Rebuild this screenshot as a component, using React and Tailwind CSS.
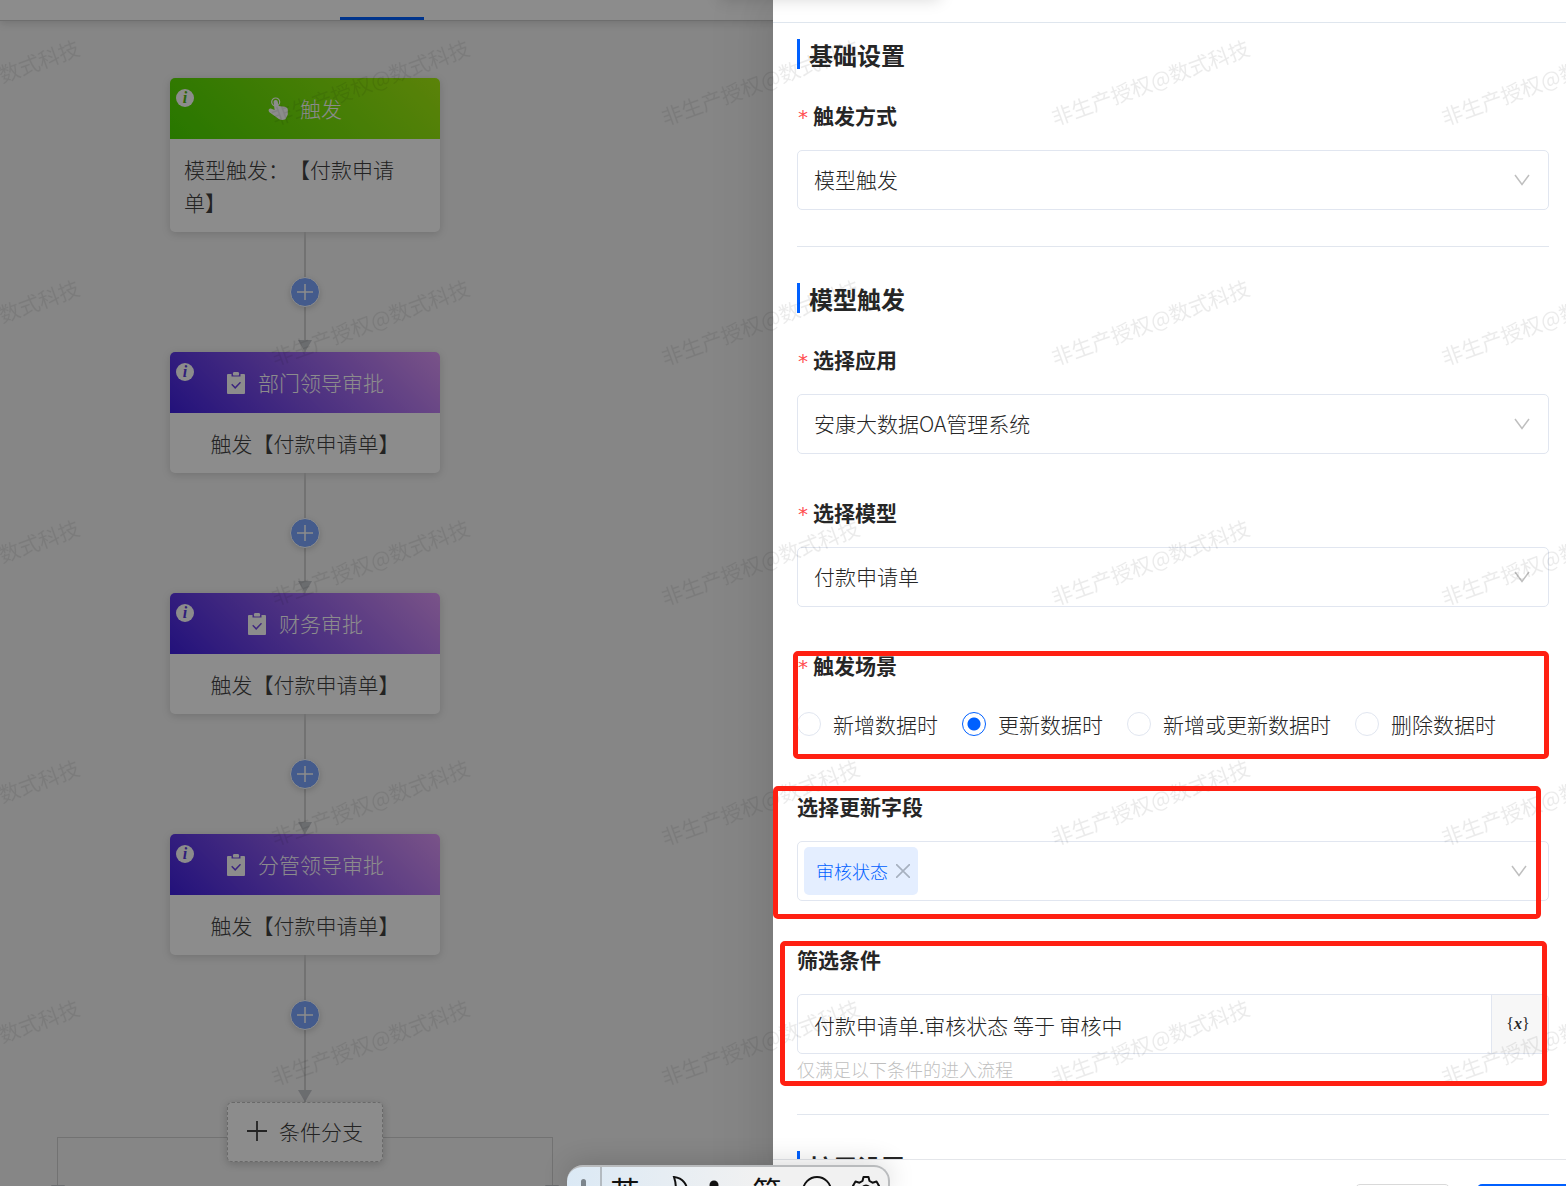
import React, { useState } from 'react';

const approvals = ['部门领导审批', '财务审批', '分管领导审批'];
const scenes = ['新增数据时', '更新数据时', '新增或更新数据时', '删除数据时'];

function ClipboardIcon() {
  return (
    <svg viewBox="0 0 20 22" className="w-5 h-[22px]" fill="currentColor">
      <path
        fillRule="evenodd"
        d="M2 2h3.500v2.600h9V2H18a1 1 0 0 1 1 1v18a1 1 0 0 1-1 1H2a1 1 0 0 1-1-1V3a1 1 0 0 1 1-1zM6.200 11.800l-1 1 4 4.200 5.800-6.200-1-1-4.800 5z"
      />
      <rect x="7" y="0" width="6" height="3.600" rx="1.200" />
    </svg>
  );
}

function TouchIcon() {
  return (
    <svg viewBox="0 0 20 23" className="w-5 h-[23px]" fill="currentColor">
      <circle cx="7.700" cy="5" r="4" fill="none" stroke="currentColor" strokeWidth="1.200" />
      <path d="M5.600 5.200a2.100 2.100 0 0 1 4.200-.4l.7 4.200 6.300.8c2 .4 3 1.500 3 3.400v4.300l-2.300 4.700c-2.300 1-4.500 1-6.300 0L1.400 15.200c-1.600-1.800-.6-4 1.400-3.700l3.800 1.400z" />
    </svg>
  );
}

function ChevronIcon({ className }) {
  return (
    <svg viewBox="0 0 16 12" className={`w-4 h-3 ${className}`} fill="none" stroke="#bfbfbf" strokeWidth="1.500">
      <path d="M1 1l7 9.500L15 1" />
    </svg>
  );
}

function FlowCard({ title, icon, header, info, children }) {
  return (
    <div className="w-full rounded-[5px] bg-white shadow-[0_2px_8px_rgba(0,0,0,0.15)] overflow-hidden">
      <div className={`relative h-[61px] flex items-center justify-center gap-3 text-white ${header}`}>
        <span className={`absolute left-[6px] top-[11px] w-[18px] h-[18px] rounded-full bg-white flex items-center justify-center font-['Liberation_Serif',serif] italic font-bold text-base leading-none ${info}`}>
          i
        </span>
        {icon}
        <span>{title}</span>
      </div>
      {children}
    </div>
  );
}

function Connector({ height }) {
  return (
    <div className={`relative flex flex-col items-center ${height}`}>
      <div className="w-[2px] flex-1 bg-[#d0d0d0]" />
      <svg viewBox="0 0 14 12" className="absolute bottom-0 w-[14px] h-3" fill="#c4c6cb">
        <path d="M0 0h14L7 12z" />
      </svg>
      <button
        type="button"
        aria-label="添加节点"
        className="absolute top-[45px] w-[30px] h-[30px] rounded-full bg-[#7ca7ff] border border-white shadow-[0_2px_6px_rgba(0,0,0,0.15)] flex items-center justify-center"
      >
        <svg viewBox="0 0 16 16" className="w-4 h-4" stroke="#fff" strokeWidth="1.500">
          <path d="M8 0v16M0 8h16" />
        </svg>
      </button>
    </div>
  );
}

function Flow() {
  return (
    <div className="relative ml-[170px] w-[270px] pt-[57px] flex flex-col items-center text-[21px] leading-[33px] text-[#404040]">
      <FlowCard
        title="触发"
        icon={<TouchIcon />}
        header="bg-[linear-gradient(45deg,#48d800,#a6ee12)]"
        info="text-[#52b810]"
      >
        <div className="h-[93px] px-[14px] flex items-center [text-spacing-trim:space-all]">模型触发：【付款申请单】</div>
      </FlowCard>
      {approvals.map((title) => (
        <React.Fragment key={title}>
          <div className="w-full">
            <Connector height="h-[120px]" />
          </div>
          <FlowCard
            title={title}
            icon={<ClipboardIcon />}
            header="bg-[linear-gradient(45deg,#3f20e0,#de98f8)]"
            info="text-[#5a3ae0]"
          >
            <div className="h-[60px] flex items-center justify-center">触发【付款申请单】</div>
          </FlowCard>
        </React.Fragment>
      ))}
      <div className="w-full">
        <Connector height="h-[147px]" />
      </div>
      <div className="relative">
        <div className="absolute top-[35px] -left-[170px] w-[496px] h-[100px] border border-[#d0d0d0]">
          <svg viewBox="0 0 14 12" className="absolute top-[47px] -left-[7px] w-[14px] h-3" fill="#c4c6cb">
            <path d="M0 0h14L7 12z" />
          </svg>
          <svg viewBox="0 0 14 12" className="absolute top-[47px] -right-[7px] w-[14px] h-3" fill="#c4c6cb">
            <path d="M0 0h14L7 12z" />
          </svg>
        </div>
        <button
          type="button"
          className="relative w-[156px] h-[60px] pb-[2px] rounded-[5px] border border-dashed border-[#bfbfbf] bg-white shadow-[0_2px_8px_rgba(0,0,0,0.2)] flex items-center justify-center gap-3"
        >
          <svg viewBox="0 0 20 20" className="w-5 h-5" stroke="#404040" strokeWidth="1.800">
            <path d="M10 0v20M0 10h20" />
          </svg>
          条件分支
        </button>
      </div>
    </div>
  );
}

function Title({ children }) {
  return (
    <h2 className="flex items-center h-[30px] pt-[2px] pl-[9px] border-l-[3px] border-[#0060ff] text-2xl font-bold whitespace-nowrap">
      {children}
    </h2>
  );
}

function Star() {
  return <span className="w-4 font-normal text-xl leading-[32px] text-[#ff4d4f] font-['DejaVu_Sans_Mono',monospace]">*</span>;
}

function Label({ htmlFor, required, children }) {
  return (
    <label htmlFor={htmlFor} className="flex h-[33px] mb-4 leading-[28px] font-bold">
      {required && <Star />}
      {children}
    </label>
  );
}

function SelectField({ id, label, value }) {
  return (
    <div>
      <Label htmlFor={id} required>{label}</Label>
      <div className="relative">
        <select
          id={id}
          className="appearance-none block w-full h-[60px] px-4 pb-[2px] rounded-[5px] border border-[#e1e6f0] bg-white font-light"
        >
          <option>{value}</option>
        </select>
        <ChevronIcon className="absolute right-[19px] top-6 pointer-events-none" />
      </div>
    </div>
  );
}

function Marker({ className }) {
  return <div className={`absolute z-20 border-[5px] border-[#ff2012] rounded-[5px] pointer-events-none ${className}`} />;
}

function Watermark() {
  return (
    <svg className="absolute inset-0 z-10 w-full h-full pointer-events-none" aria-hidden="true">
      <defs>
        <pattern id="wm" x="265" y="20" width="390" height="240" patternUnits="userSpaceOnUse">
          <text x="10" y="106" transform="rotate(-20 10 106)" fontSize="21" fontWeight="400" fill="#000" fillOpacity="0.08">
            非生产授权@数式科技
          </text>
        </pattern>
      </defs>
      <rect width="100%" height="100%" fill="url(#wm)" />
    </svg>
  );
}

function ImeBar() {
  return (
    <div className="absolute z-30 bottom-0 left-[567px] h-[21px] rounded-t-2xl shadow-[0_0_28px_rgba(0,0,0,0.2)] bg-[linear-gradient(90deg,#dbe9f5,#f1f1f1_60%)] border-t-2 border-r-2 border-[#b9bbbd] flex font-normal text-[#111] overflow-hidden">
      <div className="w-[35px] border-r-2 border-[#b3bac0] flex justify-center pt-3">
        <span className="w-[5px] h-5 rounded-full bg-[#7c858c]" />
      </div>
      <div className="flex items-start gap-5 px-2 pt-[9px]">
        <span className="w-[30px] text-[30px] leading-[28px]">英</span>
        <svg viewBox="0 0 28 28" className="w-7 h-7" fill="none" stroke="currentColor" strokeWidth="2">
          <path d="M14 1c9 1 14 8 13 16s-9 11-16 9c5-7 6-16 3-25z" />
        </svg>
        <svg viewBox="0 0 28 28" className="w-7 h-7 -ml-1" fill="currentColor">
          <circle cx="10" cy="9" r="4.500" />
        </svg>
        <span className="w-[30px] text-[30px] leading-[28px]">简</span>
        <svg viewBox="0 0 30 30" className="w-[30px] h-[30px]" fill="none" stroke="currentColor" strokeWidth="2">
          <circle cx="15" cy="15" r="14" />
        </svg>
        <svg viewBox="0 0 28 28" className="w-7 h-7" fill="none" stroke="currentColor" strokeWidth="2" strokeLinejoin="round">
          <path d="M11.500 1h5l1 4 3 1.700 4-1.200 2.500 4.300-3 3v3.400l3 3-2.500 4.300-4-1.200-3 1.700-1 4h-5l-1-4-3-1.700-4 1.200L1 19.200l3-3v-3.400l-3-3 2.500-4.300 4 1.200 3-1.700z" />
          <circle cx="14" cy="14" r="4.500" />
        </svg>
      </div>
    </div>
  );
}

export default function App() {
  const [scene, setScene] = useState('更新数据时');
  const [fields, setFields] = useState(['审核状态']);

  return (
    <div className="relative h-screen overflow-hidden bg-[#f4f4f4] text-[#262626] text-[21px] leading-[33px] font-light font-['Noto_Sans_CJK_SC',sans-serif]">
      <header className="h-[21px] bg-white border-b border-[#c8c8c8] shadow-[0_2px_8px_rgba(0,0,0,0.15)] flex">
        <div className="ml-[340px] w-[84px] border-b-[3px] border-[#0060ff]" />
      </header>
      <Flow />

      <div className="absolute inset-0 bg-black/45 grid grid-cols-[773fr_793fr]">
        <div />
        <section className="flex flex-col min-w-0 min-h-0 bg-white shadow-[-12px_0_48px_16px_rgba(0,0,0,0.04),-9px_0_28px_rgba(0,0,0,0.05)]">
          <div className="h-[23px] shrink-0 border-b border-[#dfe6ee]" />
          <form className="flex-1 min-h-0 overflow-hidden pl-6 pr-[17px] pt-4 flex flex-col">
            <div className="flex flex-col gap-8 pb-9 border-b border-[#e1e6ee] shrink-0">
              <Title>基础设置</Title>
              <SelectField id="mode" label="触发方式" value="模型触发" />
            </div>
            <div className="flex flex-col gap-11 pt-9 pb-[30px] border-b border-[#e1e6ee] shrink-0">
              <div className="flex flex-col gap-8">
                <Title>模型触发</Title>
                <SelectField id="app" label="选择应用" value="安康大数据OA管理系统" />
              </div>
              <SelectField id="model" label="选择模型" value="付款申请单" />
              <div className="relative">
                <fieldset>
                  <legend className="flex h-[33px] mb-4 leading-[28px] font-bold">
                    <Star />
                    触发场景
                  </legend>
                  <div className="flex items-center gap-6 h-12">
                    {scenes.map((s) => (
                      <label key={s} className="flex items-center gap-3 whitespace-nowrap">
                        <input
                          type="radio"
                          name="scene"
                          checked={scene === s}
                          onChange={() => setScene(s)}
                          className="appearance-none w-6 h-6 rounded-full border border-[#e1e6f0] bg-white checked:border-[#0060ff] checked:bg-[radial-gradient(circle,#0060ff_6px,#fff_7px)]"
                        />
                        {s}
                      </label>
                    ))}
                  </div>
                </fieldset>
                <Marker className="-left-1 right-0 top-0 -bottom-[11px]" />
              </div>
              <div className="relative">
                <Label htmlFor="fields">选择更新字段</Label>
                <div className="flex items-center h-[60px] pl-[6px] pr-[21px] rounded-[5px] border border-[#e1e6f0]">
                  {fields.map((f) => (
                    <span key={f} className="flex items-center gap-2 h-12 pl-3 pr-2 rounded-[5px] bg-[#e4eeff] text-[#0060ff] text-lg">
                      {f}
                      <button type="button" aria-label="移除" onClick={() => setFields(fields.filter((x) => x !== f))}>
                        <svg viewBox="0 0 14 14" className="w-[14px] h-[14px]" stroke="#a6b0bf" strokeWidth="1.600">
                          <path d="M0 0l14 14M14 0L0 14" />
                        </svg>
                      </button>
                    </span>
                  ))}
                  <input id="fields" type="text" className="flex-1 min-w-0 outline-none" />
                  <ChevronIcon className="" />
                </div>
                <Marker className="-left-6 right-2 -top-[6px] -bottom-[18px]" />
              </div>
              <div className="relative">
                <Label htmlFor="filter">筛选条件</Label>
                <div className="flex h-[60px] rounded-[5px] border border-[#e1e6f0] overflow-hidden">
                  <input
                    id="filter"
                    type="text"
                    defaultValue="付款申请单.审核状态 等于 审核中"
                    className="flex-1 min-w-0 px-4 pt-[2px] outline-none"
                  />
                  <button type="button" className="w-[57px] pr-1 border-l border-[#e1e6f0] bg-[#f7f7f7] font-['Liberation_Serif',serif] font-normal text-base">
                    {'{'}<b><i>x</i></b>{'}'}
                  </button>
                </div>
                <p className="text-lg leading-[30px] text-[#bfbfbf]">仅满足以下条件的进入流程</p>
                <Marker className="-left-[17px] right-[2px] -top-1 -bottom-[2px]" />
              </div>
            </div>
            <div className="pt-9 shrink-0">
              <Title>扩展设置</Title>
            </div>
          </form>
          <footer className="h-[27px] shrink-0 overflow-hidden border-t border-[#e4e6ea] pt-6 flex justify-end gap-[27px]">
            <button type="button" aria-label="取消" className="w-[95px] h-12 rounded-[5px] border border-[#d9d9d9] shrink-0" />
            <button type="button" aria-label="确定" className="w-[95px] h-12 rounded-[5px] bg-[#0060ff] shrink-0 -mr-[6px]" />
          </footer>
        </section>
      </div>

      <Watermark />
      <div className="absolute z-20 -top-5 left-[720px] w-[220px] h-5 shadow-[0_0_16px_rgba(0,0,0,0.15)]" />
      <ImeBar />
    </div>
  );
}
